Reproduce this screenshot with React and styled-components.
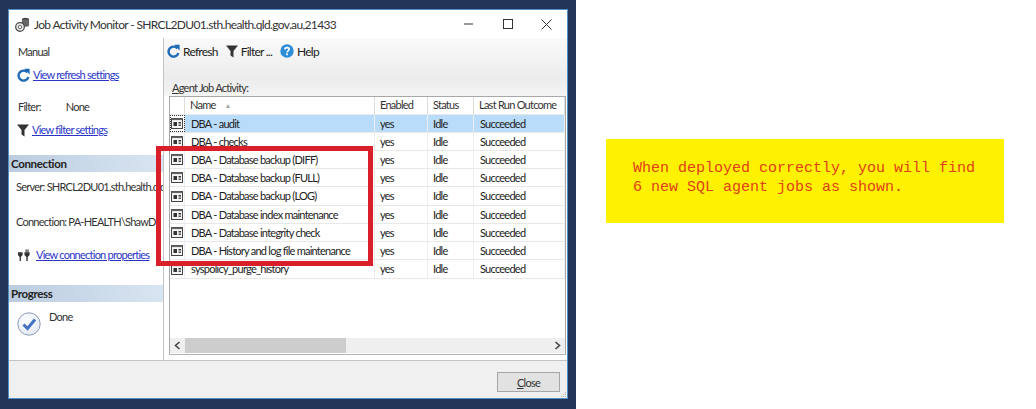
import React from "react";
import styled, { createGlobalStyle } from "styled-components";

const Global = createGlobalStyle`
  html, body { margin: 0; padding: 0; background: #fff; }
  body { font-family: "Lato", "Liberation Sans", sans-serif; font-size: 11px; letter-spacing: -0.75px; color: #1c1c1c; }
  * { box-sizing: border-box; }
  svg { flex: none; }
`;
const Page = styled.div`display: flex; width: 1036px; height: 409px; overflow: hidden;`;
const Frame = styled.div`width: 576px; height: 409px; background: #22365a; padding: 9px 8px 10px; flex: none;`;
const Win = styled.div`position: relative; height: 390px; background: #fff; border: 1px solid #4f8fc4; display: flex; flex-direction: column;`;
const TitleBar = styled.div`height: 28px; flex: none; display: flex; align-items: center; padding: 0 1px 0 6px; font-size: 12px; letter-spacing: -0.65px; color: #333;`;
const TitleText = styled.div`flex: 1; white-space: nowrap; margin-left: 4px;`;
const WinBtn = styled.div`width: 39px; height: 28px; display: flex; align-items: center; justify-content: center;`;
const Body = styled.div`flex: 1; display: flex; min-height: 0;`;
const Left = styled.div`width: 155px; flex: none; border-right: 1px solid #c4c4c4; display: flex; flex-direction: column; overflow: hidden; background: #fff;`;
const Plain = styled.div`padding-left: ${p => p.$pl ?? 9}px; margin-top: ${p => p.$mt || 0}px; height: ${p => p.$h}px; flex: none; display: flex; align-items: center; white-space: nowrap; color: #333;`;
const LinkRow = styled.div`display: flex; flex: none; align-items: center; gap: ${p => p.$gap || 3}px; padding-left: ${p => p.$pl ?? 8}px; margin-top: ${p => p.$mt || 0}px; height: 20px;`;
const A = styled.span`color: #2a35c8; text-decoration: underline; white-space: nowrap; margin-top: -1px;`;
const Val = styled.span`margin-left: 25px;`;
const Section = styled.div`height: 17px; flex: none; margin-top: ${p => p.$mt || 0}px; background: linear-gradient(90deg, #bccde0, #d8e5f2); font-size: 11.5px; letter-spacing: -0.35px; font-weight: 700; color: #222; padding-left: 2px; display: flex; align-items: center; white-space: nowrap;`;
const Done = styled.div`display: flex; padding: 9px 0 0 8px; gap: 8px;`;
const DoneText = styled.div`margin-top: -1px; color: #333;`;
const Right = styled.div`flex: 1; display: flex; flex-direction: column; min-width: 0; background: #fff;`;
const Toolbar = styled.div`height: 40px; flex: none; padding: 2px 0 0 3px; display: flex; align-items: flex-start; gap: 8px; background: linear-gradient(#fafafa, #ececec); font-size: 12px; letter-spacing: -0.75px;`;
const Tool = styled.div`display: flex; align-items: center; gap: 3px; height: 22px; white-space: nowrap; color: #222;`;
const Label = styled.div`height: 18px; padding-left: 8px; display: flex; align-items: center; background: linear-gradient(#ececec, #f4f4f4); color: #333; white-space: pre;`;
const U = styled.span`text-decoration: underline;`;
const Grid = styled.div`margin-left: 5px; width: 397px; height: 259px; border: 1px solid #a8a8a8; border-bottom-color: #b4b4b4; display: flex; flex-direction: column; background: #fff;`;
const Row = styled.div`display: grid; grid-template-columns: 15px 190px 53px 46px 1fr; height: ${p => p.$h}px; flex: none; background: ${p => p.$sel ? "#b9dcfb" : "#fff"}; border-bottom: 1px solid #e8e8e8;`;
const Head = styled.div`display: flex; align-items: center; padding: 0 0 2px ${p => p.$pl ?? 5}px; border-right: 1px solid #dcdcdc; white-space: nowrap; color: #333; gap: 9px;`;
const Sort = styled.span`font-size: 7px; color: #aaa; letter-spacing: 0;`;
const Cell = styled.div`display: flex; align-items: center; padding: 0 0 1px ${p => p.$pl ?? 5}px; border-right: 1px solid #eeeeee; white-space: nowrap; color: #222; overflow: hidden;`;
const IconCell = styled.div`display: flex; align-items: center; justify-content: center; background: #fff; border-right: 1px solid #eee; ${p => p.$focus ? "outline: 1px dotted #333; outline-offset: -1px;" : ""}`;
const Fill = styled.div`flex: 1;`;
const Scroll = styled.div`height: 15px; flex: none; display: flex; align-items: center; background: #efefef; margin: auto 0 1px;`;
const ScrollBtn = styled.div`width: 15px; height: 15px; display: flex; align-items: center; justify-content: center; flex: none;`;
const Thumb = styled.div`width: 161px; height: 15px; background: #cdcdcd;`;
const Footer = styled.div`height: 38px; flex: none; position: relative; background: #f0f0f0; border-top: 1px solid #c4c4c4; display: flex; justify-content: flex-end; padding: 11px 7px 0 0;`;
const CloseBtn = styled.div`width: 63px; height: 20px; border: 1px solid #a6a6a6; background: #e2e2e2; display: flex; align-items: center; justify-content: center; color: #333; white-space: pre;`;
const Grip = styled.svg`position: absolute; right: 0; bottom: 0;`;
const Highlight = styled.div`position: absolute; left: 147px; top: 136px; width: 217px; height: 120px; border: 5px solid #d81f2a; pointer-events: none;`;
const NoteWrap = styled.div`flex: 1; padding: 139px 0 0 30px;`;
const Note = styled.div`width: 398px; height: 84px; background: #fff200; color: #e2401b; font-family: "Liberation Mono", monospace; font-size: 15px; letter-spacing: 0; line-height: 19px; padding: 20px 0 0 27px; white-space: pre;`;

const Refresh = () => (
  <svg width="13" height="15" viewBox="0 0 13 15">
    <path d="M10.4 4.4 A5 5 0 1 0 11.4 9" fill="none" stroke="#1f6bb5" strokeWidth="2.4" />
    <path d="M7.2 0.8 L12.6 0.8 L12.6 6.6 Z" fill="#1f6bb5" />
  </svg>
);
const Funnel = () => (
  <svg width="12" height="13" viewBox="0 0 12 13"><path d="M0 0.5 H12 L7.5 6 V12.5 L4.5 10.5 V6 Z" fill="#333" /></svg>
);
const Help = () => (
  <svg width="14" height="14" viewBox="0 0 14 14">
    <circle cx="7" cy="7" r="6.7" fill="#2d8ed8" />
    <path d="M4.8 5.4 C4.9 3 9.2 3 9.2 5.3 C9.2 6.8 7 6.8 7 8.4" fill="none" stroke="#fff" strokeWidth="1.6" />
    <rect x="6.1" y="9.4" width="1.8" height="1.8" fill="#fff" />
  </svg>
);
const Job = () => (
  <svg width="12" height="11" viewBox="0 0 12 11">
    <rect x="0.5" y="0.5" width="11" height="10" fill="#f6f6f6" stroke="#444" />
    <rect x="0.5" y="0.5" width="11" height="1.6" fill="#666" />
    <rect x="2.5" y="4" width="3.5" height="4" fill="#333" />
    <rect x="7.5" y="4" width="2.5" height="1.5" fill="#333" />
    <rect x="7.5" y="6.5" width="2.5" height="1.5" fill="#555" />
  </svg>
);
const AppIcon = () => (
  <svg width="15" height="15" viewBox="0 0 15 15">
    <ellipse cx="10.5" cy="2.5" rx="3.6" ry="1.8" fill="#444" />
    <path d="M6.9 2.5 V8.5 C7.5 10.2 13.5 10.2 14.1 8.5 V2.5 Z" fill="#666" />
    <circle cx="5" cy="10" r="4.3" fill="#f2f2f2" stroke="#444" strokeWidth="1.2" />
    <circle cx="5" cy="10" r="1.8" fill="none" stroke="#666" />
  </svg>
);
const Plug = () => (
  <svg width="14" height="13" viewBox="0 0 15 13" fill="#333">
    <path d="M1 3 H6 V6 L4.2 8 V12.5 H2.8 V8 L1 6 Z" />
    <path d="M8 3 H13.5 V6 L11.5 8 V12.5 H10 V8 L8 6 Z" />
    <rect x="9.2" y="0" width="1.2" height="3" />
    <rect x="11.2" y="0" width="1.2" height="3" />
  </svg>
);
const Check = () => (
  <svg width="24" height="26" viewBox="0 0 24 26">
    <defs><radialGradient id="g" cx="0.4" cy="0.35" r="0.8"><stop offset="0" stopColor="#ffffff" /><stop offset="1" stopColor="#dfe6f2" /></radialGradient></defs>
    <circle cx="12" cy="13" r="11.2" fill="url(#g)" stroke="#8d9cb8" />
    <path d="M6.5 13.5 L10.5 17.5 L18 8.5" fill="none" stroke="#4472c4" strokeWidth="3" />
  </svg>
);

const jobs = [
  "DBA - audit", "DBA - checks", "DBA - Database backup (DIFF)", "DBA - Database backup (FULL)",
  "DBA - Database backup (LOG)", "DBA - Database index maintenance", "DBA - Database integrity check",
  "DBA - History and log file maintenance", "syspolicy_purge_history",
];
const rowHeights = [18, 18, 18, 18, 19, 18, 18, 18, 19];

export default function App() {
  return (
    <Page>
      <Global />
      <Frame>
        <Win>
          <TitleBar>
            <AppIcon />
            <TitleText>Job Activity Monitor - SHRCL2DU01.sth.health.qld.gov.au,21433</TitleText>
            <WinBtn><svg width="10" height="2"><rect width="9" height="1" y="0.5" fill="#333" /></svg></WinBtn>
            <WinBtn><svg width="10" height="10"><rect x="0.5" y="0.5" width="9" height="9" fill="none" stroke="#333" /></svg></WinBtn>
            <WinBtn><svg width="11" height="11"><path d="M0.5 0.5 L10.5 10.5 M10.5 0.5 L0.5 10.5" stroke="#333" /></svg></WinBtn>
          </TitleBar>
          <Body>
            <Left>
              <Plain $h={27}>Manual</Plain>
              <LinkRow><Refresh /><A>View refresh settings</A></LinkRow>
              <Plain $h={20} $mt={11}>Filter:<Val>None</Val></Plain>
              <LinkRow $mt={4}><Funnel /><A>View filter settings</A></LinkRow>
              <Section $mt={15}>Connection</Section>
              <Plain $h={28} $pl={7}>Server: SHRCL2DU01.sth.health.qld.gov.au</Plain>
              <Plain $h={20} $mt={11} $pl={7}>Connection: PA-HEALTH\ShawD</Plain>
              <LinkRow $mt={14} $gap={5}><Plug /><A>View connection properties</A></LinkRow>
              <Section $mt={20}>Progress</Section>
              <Done><Check /><DoneText>Done</DoneText></Done>
            </Left>
            <Right>
              <Toolbar>
                <Tool><Refresh />Refresh</Tool>
                <Tool><Funnel />Filter ...</Tool>
                <Tool><Help />Help</Tool>
              </Toolbar>
              <Label><U>A</U>gent Job Activity:</Label>
              <Grid>
                <Row $h={18}>
                  <Head $pl={0} />
                  <Head>Name <Sort>▲</Sort></Head>
                  <Head>Enabled</Head>
                  <Head>Status</Head>
                  <Head>Last Run Outcome</Head>
                </Row>
                {jobs.map((j, i) => (
                  <Row key={j} $h={rowHeights[i]} $sel={i === 0}>
                    <IconCell $focus={i === 0}><Job /></IconCell>
                    <Cell $pl={6}>{j}</Cell>
                    <Cell>yes</Cell>
                    <Cell $pl={5}>Idle</Cell>
                    <Cell $pl={6}>Succeeded</Cell>
                  </Row>
                ))}
                <Fill />
                <Scroll>
                  <ScrollBtn><svg width="7" height="9"><path d="M5.5 1 L1.5 4.5 L5.5 8" fill="none" stroke="#444" strokeWidth="1.6" /></svg></ScrollBtn>
                  <Thumb />
                  <Fill />
                  <ScrollBtn><svg width="7" height="9"><path d="M1.5 1 L5.5 4.5 L1.5 8" fill="none" stroke="#444" strokeWidth="1.6" /></svg></ScrollBtn>
                </Scroll>
              </Grid>
            </Right>
          </Body>
          <Footer>
            <CloseBtn><span><U>C</U>lose</span></CloseBtn>
            <Grip width="7" height="7" viewBox="0 0 7 7" fill="#b5b5b5">
              <rect x="5" y="1" width="1" height="1" /><rect x="3" y="3" width="1" height="1" /><rect x="5" y="3" width="1" height="1" />
              <rect x="1" y="5" width="1" height="1" /><rect x="3" y="5" width="1" height="1" /><rect x="5" y="5" width="1" height="1" />
            </Grip>
          </Footer>
          <Highlight />
        </Win>
      </Frame>
      <NoteWrap>
        <Note>{"When deployed correctly, you will find\n6 new SQL agent jobs as shown."}</Note>
      </NoteWrap>
    </Page>
  );
}
